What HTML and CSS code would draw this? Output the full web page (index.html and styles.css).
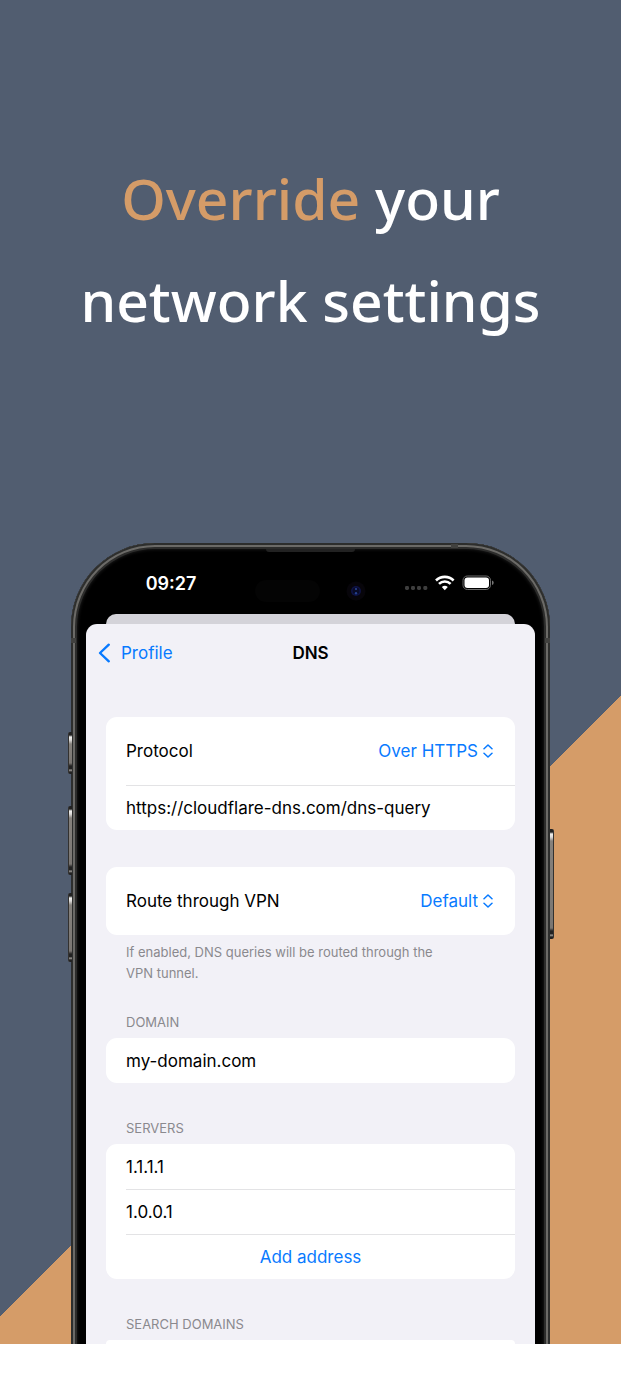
FILE: index.html
```html
<!DOCTYPE html>
<html lang="en">
<head>
<meta charset="utf-8">
<meta name="viewport" content="width=device-width, initial-scale=1">
<title>Override your network settings</title>
<link rel="stylesheet" href="styles.css">
</head>
<body>
<main class="poster">
  <h1 class="headline"><span class="accent">Override</span> your<br>network settings</h1>
  <div class="phone">
    <span class="key key-action"></span>
    <span class="key key-up"></span>
    <span class="key key-down"></span>
    <span class="key key-power"></span>
    <span class="speaker"></span>
    <span class="band band-top"></span>
    <span class="band band-left"></span>
    <span class="band band-right"></span>
    <div class="statusbar">
      <time class="clock">09:27</time>
      <span class="island"></span>
      <svg class="camera" width="20" height="20" viewBox="0 0 20 20" aria-hidden="true">
        <circle cx="10" cy="10" r="9.5" fill="#07050a"/>
        <circle cx="10" cy="10" r="5" fill="#0e1245"/>
        <circle cx="10" cy="10" r="3.4" fill="#080b26"/>
        <circle cx="10" cy="8" r="1.1" fill="#2c4391"/>
        <circle cx="10" cy="12.3" r="1.2" fill="#24408e"/>
      </svg>
      <svg class="indicators" width="90" height="18" viewBox="0 0 90 18" aria-label="Wi-Fi connected, battery full" role="img">
        <g fill="#3e3e3e">
          <rect x="0" y="11" width="4" height="4" rx="1.4"/><rect x="6" y="11" width="4" height="4" rx="1.4"/>
          <rect x="12" y="11" width="4" height="4" rx="1.4"/><rect x="18.3" y="11" width="4" height="4" rx="1.4"/>
        </g>
        <g fill="none" stroke="#fff" stroke-width="2.6">
          <path d="M31 5.500a12.600 12.600 0 0 1 17.600 0"/>
          <path d="M34 8.900a8.200 8.200 0 0 1 11.600 0"/>
        </g>
        <path d="M39.800 15.200l-3-3.100a4.300 4.300 0 0 1 6 0z" fill="#fff"/>
        <rect x="58" y="1" width="27.500" height="13.500" rx="4.300" fill="none" stroke="#6b6b6b"/>
        <rect x="59.500" y="2.500" width="24.500" height="10.500" rx="3" fill="#fff"/>
        <path d="M87 5.500q1.700.6 1.700 2.300T87 10.100z" fill="#757575"/>
      </svg>
    </div>
    <div class="sheet-behind"></div>
    <section class="sheet">
      <header class="navbar">
        <a class="back" href="#profile">
          <svg width="13" height="20" viewBox="0 0 13 20" fill="none" stroke="currentColor" stroke-width="2.4" stroke-linecap="round" stroke-linejoin="round" aria-hidden="true"><path d="M10.800 1.700L2 10l8.800 8.300"/></svg>
          Profile
        </a>
        <h2 class="title">DNS</h2>
      </header>
      <form class="form">
        <div class="card">
          <div class="row tall">
            <label for="protocol">Protocol</label>
            <span class="picker">
              <select id="protocol"><option>Over HTTPS</option></select>
              <svg class="updown" width="10" height="14" viewBox="0 0 10 14" aria-hidden="true"><path d="M1 4.800L5 1l4 3.800M1 9.200L5 13l4-3.800"/></svg>
            </span>
          </div>
          <div class="row"><input type="text" aria-label="Resolver URL" value="https://cloudflare-dns.com/dns-query"></div>
        </div>
        <div class="group">
          <div class="card">
            <div class="row tall">
              <label for="route">Route through VPN</label>
              <span class="picker">
                <select id="route"><option>Default</option></select>
                <svg class="updown" width="10" height="14" viewBox="0 0 10 14" aria-hidden="true"><path d="M1 4.800L5 1l4 3.800M1 9.200L5 13l4-3.800"/></svg>
              </span>
            </div>
          </div>
          <p class="note">If enabled, DNS queries will be routed through the VPN tunnel.</p>
        </div>
        <div class="group labelled">
          <label class="caption" for="domain">DOMAIN</label>
          <div class="card"><div class="row"><input id="domain" type="text" value="my-domain.com"></div></div>
        </div>
        <div class="group labelled">
          <h3 class="caption">SERVERS</h3>
          <div class="card">
            <div class="row"><input type="text" aria-label="Server 1" value="1.1.1.1"></div>
            <div class="row"><input type="text" aria-label="Server 2" value="1.0.0.1"></div>
            <div class="row"><button class="add" type="button">Add address</button></div>
          </div>
        </div>
        <div class="group labelled">
          <h3 class="caption">SEARCH DOMAINS</h3>
          <div class="card cut"></div>
        </div>
      </form>
    </section>
  </div>
</main>
</body>
</html>
```
FILE: styles.css
```css
* { box-sizing: border-box; }
body { margin: 0; background: #fff; font-family: Inter, "Liberation Sans", sans-serif; font-size: 17px; color: #000; }
h1, h2, h3, p { margin: 0; font-weight: 400; }

.poster { overflow: hidden; padding: 147px 71px 0; background: linear-gradient(135deg, #515d70 67%, #d59c68 67%); }
.headline { margin: 0 -60px; color: #fff; font-family: "Noto Sans", sans-serif; font-size: 57px; font-weight: 500; line-height: 102px; text-align: center; }
.accent { color: #d59c68; }

.phone {
  position: relative;
  z-index: 0;
  margin-top: 192px;
  padding: 2px 15px 0;
  clip-path: inset(0 -8px 0 -8px);
}
/* The frame runs on past the poster's lower edge, where it is clipped. */
.phone::before {
  content: "";
  position: absolute;
  inset: 0 0 -30px;
  z-index: -1;
  border-radius: 84px 84px 0 0;
  background: #000;
  box-shadow: inset 0 0 0 2px #2d2e2d, inset 0 0 0 4px #6b6a67, inset 0 0 0 6px #2c2c2b, inset 0 0 3px 7px #161616;
}
.key {
  position: absolute;
  left: -3px;
  width: 4px;
  border-left: 1px solid #33312f;
  border-radius: 2px 0 0 2px;
  background: linear-gradient(#222 3px, #f0f0ee 5px, #dcdad8 8px, #85817c 12px, #7a7672 calc(100% - 11px), #222 calc(100% - 8px), #222 calc(100% - 5px), #a5a29e calc(100% - 4px), #222 calc(100% - 2px));
}
.key-action { top: 189px; height: 42px; }
.key-up { top: 263px; height: 69px; }
.key-down { top: 350px; height: 69px; }
.key-power { top: 286px; right: -4px; left: auto; height: 110px; border-width: 0 1px 0 0; border-right: 1px solid #33312f; border-radius: 0 2px 2px 0; }
.speaker { position: absolute; top: 6px; left: 195px; width: 89px; height: 3px; border-radius: 0 0 3px 3px; background: #222; }
.band { position: absolute; background: #41413f; }
.band-top { top: 1px; right: 92px; width: 7px; height: 4px; }
.band-left, .band-right { top: 95px; width: 5px; height: 5px; }
.band-left { left: 0; }
.band-right { right: 0; }

.statusbar { display: grid; grid-template-columns: 169px 65px 26px 20px 1fr; align-items: center; height: 69px; padding-top: 8px; }
.clock { padding-left: 1px; color: #fff; font-size: 18px; font-weight: 600; text-align: center; }
.island { height: 22px; margin-top: 14px; border-radius: 11px; background: #040404; }
.camera { grid-column: 4; margin-top: 14px; }
.indicators { justify-self: end; margin-right: 40px; }

.sheet-behind { height: 10px; margin: 0 20px; border-radius: 11px 11px 0 0; background: #d4d3d9; }
.sheet { border-radius: 11px 11px 0 0; background: #f2f1f7; }
.navbar { display: grid; grid-template-columns: 1fr auto 1fr; align-items: center; height: 57px; padding: 0 12px; }
.back { display: flex; align-items: center; gap: 10px; color: #087aff; text-decoration: none; }
.title { font-size: 17px; font-weight: 600; }

.form { display: flex; flex-direction: column; gap: 30px; padding: 36px 20px 0; }
.card { border-radius: 11px; background: #fff; overflow: hidden; }
.card + .group, .labelled + .labelled { margin-top: 7px; }
.row { display: flex; align-items: center; justify-content: space-between; height: 45px; margin-left: 20px; padding-right: 20px; }
.row.tall { height: 68px; }
.row + .row { border-top: 1px solid #e3e3e5; }
.row input { flex: 1; min-width: 0; padding: 0; border: 0; background: none; color: inherit; font: inherit; outline: none; }
.picker { display: flex; align-items: center; gap: 5px; padding-right: 2px; color: #087aff; }
.picker select { appearance: none; field-sizing: content; padding: 0; border: 0; background: none; color: inherit; font: inherit; text-align-last: right; }
.updown { fill: none; stroke: currentColor; stroke-width: 1.5; stroke-linecap: round; stroke-linejoin: round; }
.note { max-width: 350px; padding: 7px 0 0 20px; color: #8a898e; font-size: 13px; line-height: 21px; }
.caption { display: block; padding: 0 20px 8px; color: #8a898e; font-size: 13px; line-height: 16px; }
.add { flex: 1; padding: 0; border: 0; background: none; color: #087aff; font: inherit; }
.cut { height: 4px; border-radius: 11px 11px 0 0; }
```
